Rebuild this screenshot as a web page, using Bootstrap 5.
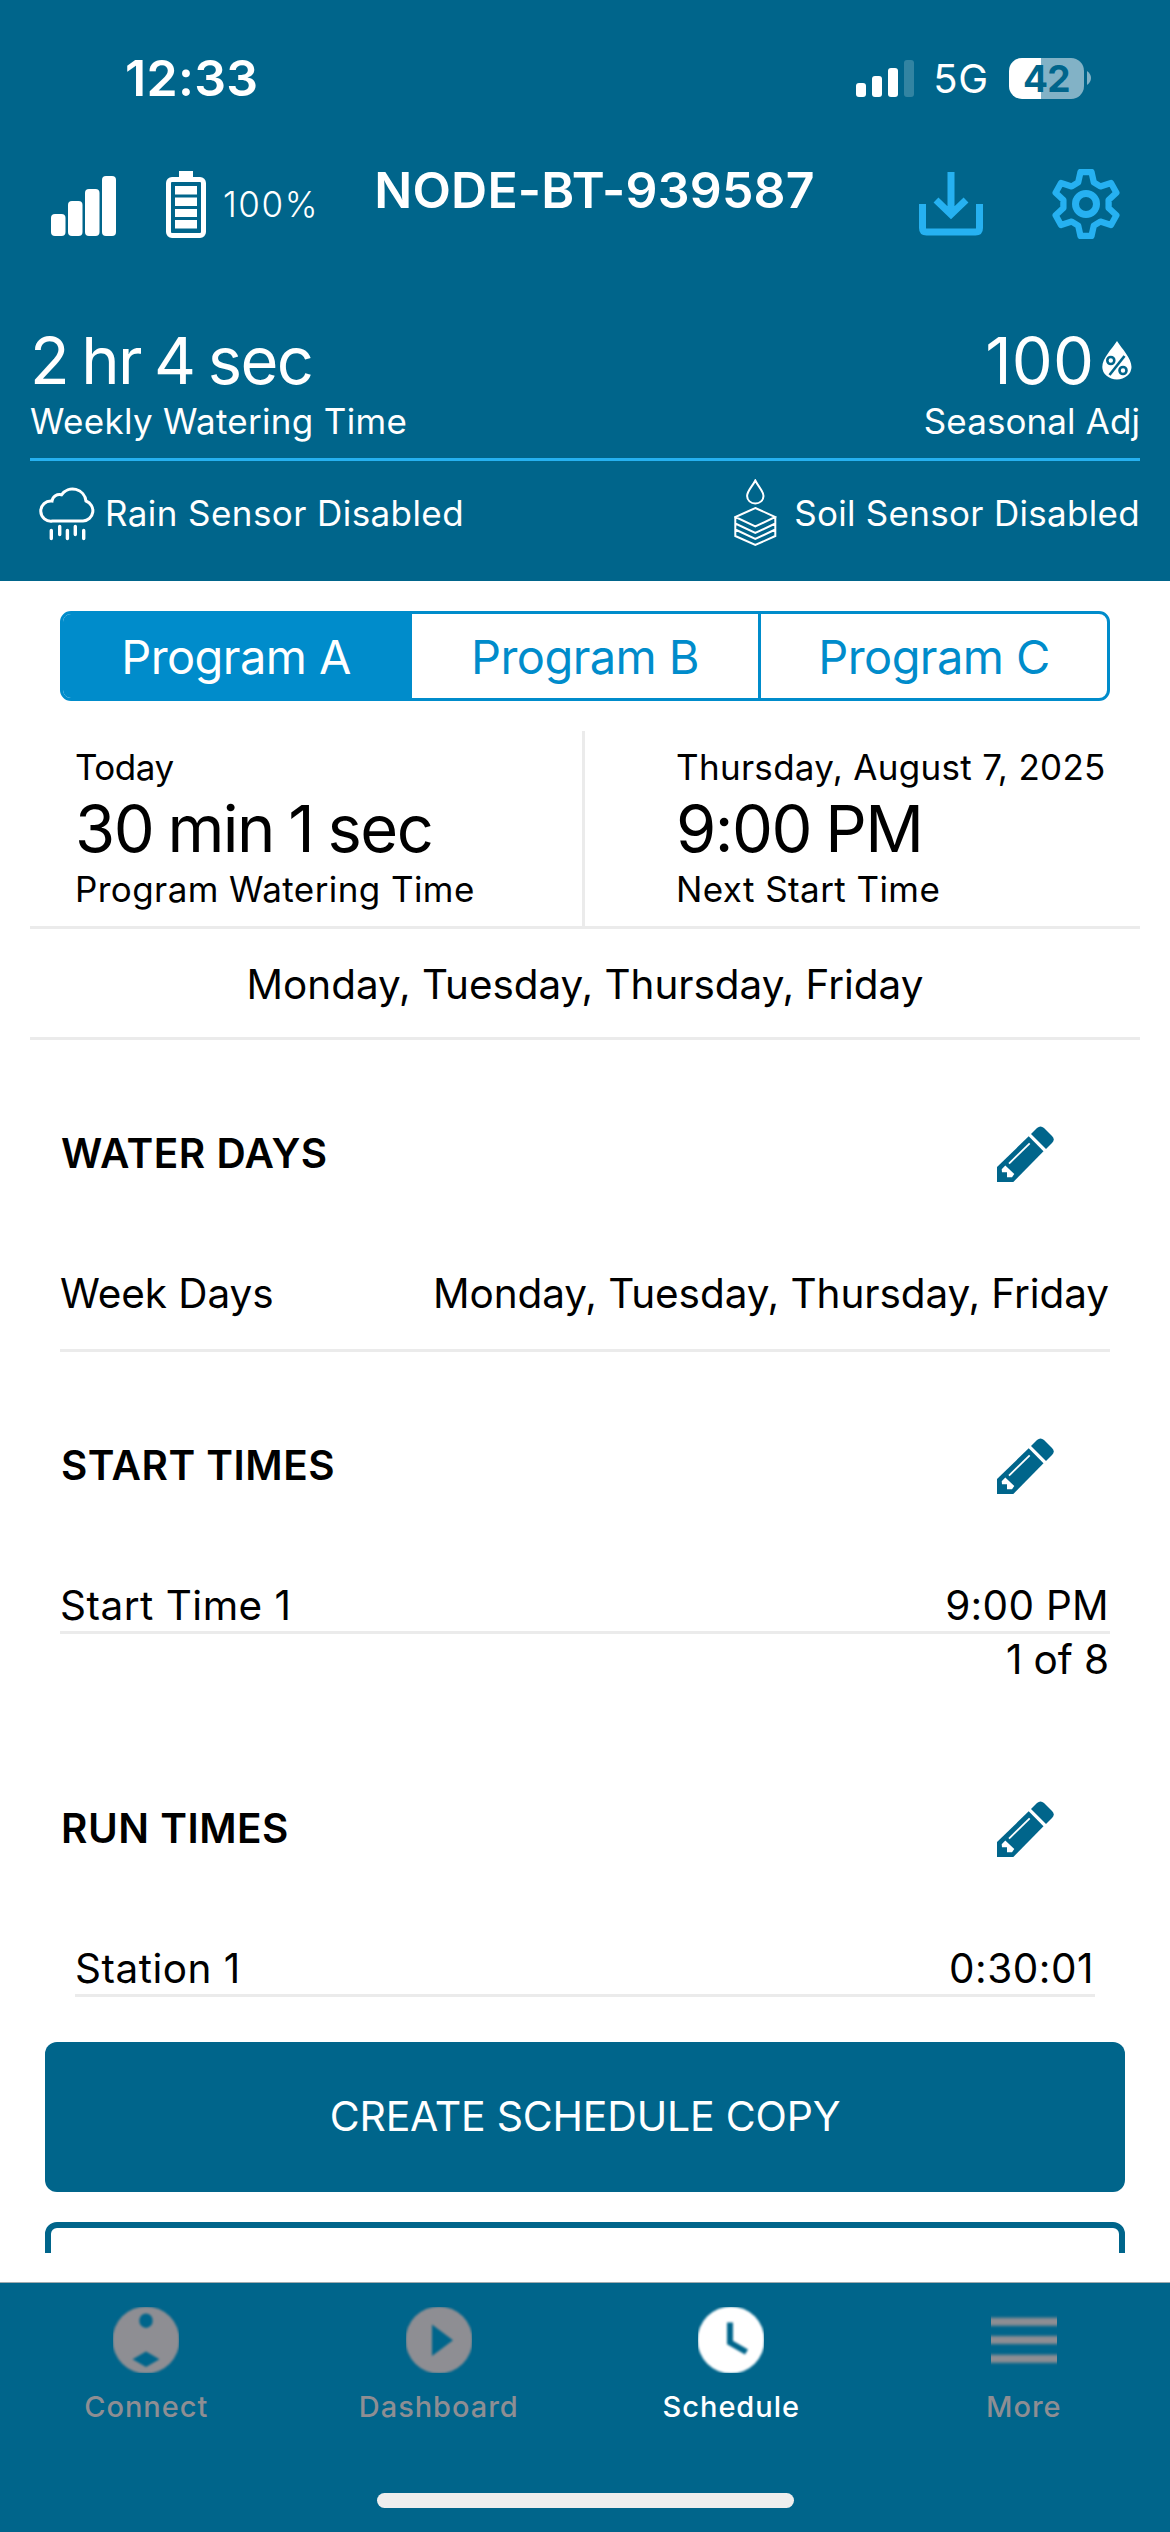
<!DOCTYPE html>
<html lang="en">
<head>
<meta charset="utf-8">
<meta name="viewport" content="width=device-width, initial-scale=1">
<title>NODE-BT-939587 Schedule</title>
<link href="https://cdn.jsdelivr.net/npm/bootstrap@5.3.0/dist/css/bootstrap.min.css" rel="stylesheet">
<style>
:root{--deep:#00658b;--sky:#26b1f1;--tabblue:#008ccb;--rule:#ebebeb;--mute:#8e8e93}
body{font-family:Inter,"Liberation Sans",sans-serif;color:#000;width:1170px;height:2532px;overflow:hidden;background:#fff;line-height:1}
svg{display:block;flex:none}
.deep{background:var(--deep)}
.topzone{height:581px}
.statusbar{height:156px;padding:0 79px 0 125px}
.clock{font-size:50px;font-weight:600;letter-spacing:.3px}
.net{font-size:40px;font-weight:400;letter-spacing:.8px;margin:2px 20px 0 19px}
.pill{width:75px;height:41px;border-radius:13px;background:linear-gradient(90deg,#fff 42.6%,#82b2c6 42.6%);color:var(--deep);font-size:37px;font-weight:700;letter-spacing:-.6px}
.appbar{height:96px;padding:0 50px 0 51px}
.cell{margin-left:50px}
.cog{margin-left:69px}
.pct{font-size:35px;font-weight:300;letter-spacing:1.6px;margin-left:17px}
.node{font-size:50px;font-weight:600;letter-spacing:.22px;margin-left:55px;padding-bottom:28px}
.inset{margin:0 30px}
.big{font-size:65px;line-height:72px;height:72px;padding-top:1px;letter-spacing:-1.5px;word-spacing:-2.5px;white-space:nowrap}
.big.weekly{letter-spacing:-1.6px;word-spacing:-3.5px}
.lbl{font-size:35px;line-height:50px;letter-spacing:.42px;white-space:nowrap}
.stats{padding-top:72px;padding-bottom:12px;border-bottom:3px solid var(--sky)}
.sensors{height:104px}
.seg{display:flex;height:90px;margin:30px 60px 0;border:3px solid var(--tabblue);border-radius:11px;overflow:hidden}
.seg .btn{font-size:47px;line-height:1;padding:0;letter-spacing:-.6px;color:var(--tabblue);border:0;border-radius:0;flex:0 0 349px}
.seg .btn.mid{flex-basis:346px}
.seg .btn.last{border-left:3px solid var(--tabblue)}
.seg .btn.active{background:var(--tabblue);color:#fff;padding-right:3px}
.info{height:198px;margin-top:30px;border-bottom:3px solid var(--rule)}
.info>div{padding-top:11px}
.info .left{width:555px;padding-left:45px;border-right:3px solid var(--rule)}
.info .right{padding-left:91px}
.days{height:111px;font-size:40.4px;border-bottom:3px solid var(--rule);padding-top:4px}
.sect{margin:74px 60px 0}
.sect.far{margin-top:105px}
.head{height:80px;padding:0 56px 0 1px;font-size:40.5px;font-weight:600;letter-spacing:.5px}
.line{margin-top:74px;padding:1px 1px 0 0;font-size:40.5px;line-height:50px;letter-spacing:-.08px;border-bottom:3px solid var(--rule)}
.line.roomy{padding-bottom:30px}
.line.slim{margin-left:15px;margin-right:15px}
.line.tally{margin-top:0;border:0;height:50px}
.act{margin:0 45px;height:150px;border-radius:12px}
.act.btn{display:flex;width:1080px;font-size:41px;letter-spacing:-.2px;border:0;border-radius:12px;background:var(--deep);color:#fff;margin-top:45px}
.peek{height:31px;margin-top:30px;overflow:hidden}
.outline{border:6px solid var(--deep)}
.tabbar{margin-top:29px;height:250px;border-top:1px solid #9fabb0}
.tabbar .nav-link{padding:24px 0 0;color:var(--mute);font-size:29px;font-weight:500;letter-spacing:.95px}
.tabbar .nav-link.active{color:#fff}
.tabbar span{line-height:40px;margin-top:14px}
.soft{filter:blur(1px)}
.softer{filter:blur(1.8px)}
.home{width:417px;height:15px;border-radius:8px;background:#eee;margin:66px auto 0}
.w1{letter-spacing:.1px}.w2{letter-spacing:.3px}.w3{letter-spacing:.5px}.tight{letter-spacing:-.5px}
</style>
</head>
<body>
<svg width="0" height="0" class="position-absolute"><defs>
<symbol id="pencil" viewBox="0 0 57 56"><path fill="#00658b" d="M0 41 31.7 10.3 46.5 25.3 16.3 56H0z"/><path fill="#00658b" d="M34 8 40 2Q43.5-1 47 2L55 10Q58.5 13.5 55 17L49 23z"/><path stroke="#fff" stroke-width="1.8" d="M12 37.7 32.7 17.3"/><path fill="#fff" d="M4.7 43.3 8.3 39.5 17.3 48 15 51.3H10V46.3H5z"/></symbol>
</defs></svg>

<header class="deep topzone text-white">
  <div class="statusbar d-flex align-items-center">
    <div class="clock">12:33</div>
    <svg class="ms-auto" width="58" height="37" fill="#fff"><rect y="23" width="10" height="14" rx="3"/><rect x="16" y="16" width="10" height="21" rx="3"/><rect x="32" y="8" width="10" height="29" rx="3"/><rect x="48" width="10" height="37" rx="3" fill="#3284a2"/></svg>
    <div class="net">5G</div>
    <div class="pill d-flex align-items-center justify-content-center">42</div>
    <svg width="7" height="14"><path d="M3 0Q7 3 7 7T3 14z" fill="#82b2c6"/></svg>
  </div>

  <div class="appbar d-flex align-items-center">
    <svg class="mt-1" width="65" height="60" fill="#fff"><rect y="38" width="14.5" height="22" rx="4"/><rect x="17" y="25" width="14.5" height="35" rx="4"/><rect x="34" y="13" width="14.5" height="47" rx="4"/><rect x="51" width="14" height="60" rx="4"/></svg>
    <svg class="cell" width="40" height="67"><path fill="#fff" d="M13 0h14v8H13z"/><rect x="2.5" y="8.5" width="35" height="56" rx="3.5" fill="none" stroke="#fff" stroke-width="5"/><path fill="#fff" d="M9 15h22v8.5H9zM9 26.5h22v8.5H9zM9 38h22v8H9zM9 49h22v8.5H9z"/></svg>
    <div class="pct">100%</div>
    <div class="node">NODE-BT-939587</div>
    <svg class="ms-auto" width="64" height="64" fill="none" stroke="#26b1f1" stroke-width="7"><path d="M3.5 32V56q0 4 4 4H56.500q4 0 4-4V32M32 0V41M17 28 32 42.500 47 28"/></svg>
    <svg class="cog" width="68" height="70" viewBox="-34 -35 68 70" fill="none" stroke="#26b1f1"><circle r="10.500" stroke-width="7"/><path stroke-width="6.300" stroke-linejoin="round" d="M-5.500-32H5.500L7.800-21.600 14.300-17.600 25-21 30.400-11.300 22.600-4V4L30.400 11.300 25 21 14.300 17.600 7.800 21.600 5.500 32H-5.500L-7.800 21.600-14.300 17.600-25 21-30.400 11.300-22.600 4V-4L-30.400-11.300-25-21-14.300-17.600-7.800-21.600z"/></svg>
  </div>

  <div class="inset stats d-flex justify-content-between">
    <div><div class="big weekly">2 hr 4 sec</div><div class="lbl w2">Weekly Watering Time</div></div>
    <div class="text-end">
      <div class="d-flex align-items-center justify-content-end pe-2"><div class="big w1">100</div>
      <svg width="30" height="39" class="ms-2"><path fill="#fff" d="M15 0C20 8 29.500 17 29.500 26A14.600 12.500 0 0 1 .3 26C.3 17 10 8 15 0z"/><g fill="none" stroke="#00658b" stroke-width="2.600"><circle cx="8.800" cy="19.500" r="3.500"/><circle cx="21" cy="29.500" r="3.500"/><path d="M22.500 15 7.500 34"/></g></svg></div>
      <div class="lbl w1">Seasonal Adj</div>
    </div>
  </div>
  <div class="inset sensors d-flex align-items-center justify-content-between">
    <div class="d-flex align-items-center">
      <svg class="ms-2" width="57" height="55" fill="none" stroke="#fff" stroke-linecap="round"><g transform="translate(2)"><path stroke-width="3" d="M12.500 35H43A10.300 10.300 0 0 0 46 15 13.500 13.500 0 0 0 21.500 8.800 7.500 7.500 0 0 0 12 15 10.100 10.100 0 1 0 12.500 35z"/><path stroke-width="3.400" d="M11.300 44.500V52.500M19.700 40.500V48.500M27.400 44.500V52.500M35.300 40.500V48.500M43.700 44.500V52.500"/></g></svg>
      <div class="lbl" style="margin-left:10px">Rain Sensor Disabled</div>
    </div>
    <div class="d-flex align-items-center">
      <svg width="43" height="68" fill="none" stroke="#fff" stroke-width="2"><path d="M21.300 1.500C24.500 8 29.500 12 29.500 17A8.200 7.600 0 0 1 13.100 17C13.100 12 18 8 21.300 1.500zM21.300 29 41.300 38 21.300 47.500 1.300 38zM1.300 38V57L21.300 66 41.300 57V38M1.300 44.500 21.300 54 41.300 44.500M1.300 50.500 21.300 60 41.300 50.500"/></svg>
      <div class="lbl w2" style="margin-left:17px">Soil Sensor Disabled</div>
    </div>
  </div>
</header>

<main>
  <div class="seg" role="group"><button class="btn active">Program A</button><button class="btn mid">Program B</button><button class="btn last">Program C</button></div>

  <div class="inset info d-flex">
    <div class="left"><div class="lbl tight">Today</div><div class="big">30 min 1 sec</div><div class="lbl">Program Watering Time</div></div>
    <div class="right"><div class="lbl w2">Thursday, August 7, 2025</div><div class="big">9:00 PM</div><div class="lbl">Next Start Time</div></div>
  </div>
  <div class="inset days d-flex align-items-center justify-content-center">Monday, Tuesday, Thursday, Friday</div>

  <section class="sect">
    <div class="head d-flex align-items-center justify-content-between">WATER DAYS<svg width="57" height="56"><use href="#pencil"/></svg></div>
    <div class="line roomy d-flex justify-content-between"><span>Week Days</span><span>Monday, Tuesday, Thursday, Friday</span></div>
  </section>

  <section class="sect">
    <div class="head d-flex align-items-center justify-content-between">START TIMES<svg width="57" height="56"><use href="#pencil"/></svg></div>
    <div class="line d-flex justify-content-between"><span class="w3">Start Time 1</span><span class="w2">9:00 PM</span></div>
    <div class="line tally text-end">1 of 8</div>
  </section>

  <section class="sect far">
    <div class="head d-flex align-items-center justify-content-between">RUN TIMES<svg width="57" height="56"><use href="#pencil"/></svg></div>
    <div class="line slim d-flex justify-content-between"><span class="w3">Station 1</span><span class="w3">0:30:01</span></div>
  </section>

  <button class="act btn align-items-center justify-content-center">CREATE SCHEDULE COPY</button>
  <div class="peek"><div class="act outline"></div></div>
</main>

<footer class="tabbar deep">
  <nav class="nav nav-fill flex-nowrap">
    <a class="nav-link col-3 d-flex flex-column align-items-center"><svg width="66" height="66"><g class="soft"><circle cx="33" cy="33" r="33.500" fill="#8e8e93"/><ellipse cx="33" cy="13.700" rx="6.700" ry="7.200" fill="#00658b"/><path fill="#00658b" d="M19.500 52.300 33 44.500 46.500 52.300 33 60z"/></g></svg><span>Connect</span></a>
    <a class="nav-link col-3 d-flex flex-column align-items-center"><svg width="66" height="66"><g class="soft"><circle cx="33" cy="33" r="33.500" fill="#8e8e93"/><path fill="#00658b" d="M26 17.500 47 33.300 26 49z"/></g></svg><span>Dashboard</span></a>
    <a class="nav-link active col-3 d-flex flex-column align-items-center"><svg width="66" height="66"><g class="soft"><circle cx="33" cy="33" r="33.500" fill="#fff"/><path fill="none" stroke="#00658b" stroke-width="6" d="M32 15.500V35.500L48.500 45"/></g></svg><span>Schedule</span></a>
    <a class="nav-link col-3 d-flex flex-column align-items-center"><svg width="66" height="66"><g class="softer" fill="#8e8e93"><path d="M-9 10.700H75V18.700H-9zM-9 29H75V37H-9zM-9 47.700H75V55.700H-9z"/></g></svg><span>More</span></a>
  </nav>
  <div class="home"></div>
</footer>
<script src="https://cdn.jsdelivr.net/npm/bootstrap@5.3.0/dist/js/bootstrap.bundle.min.js"></script>
</body>
</html>
